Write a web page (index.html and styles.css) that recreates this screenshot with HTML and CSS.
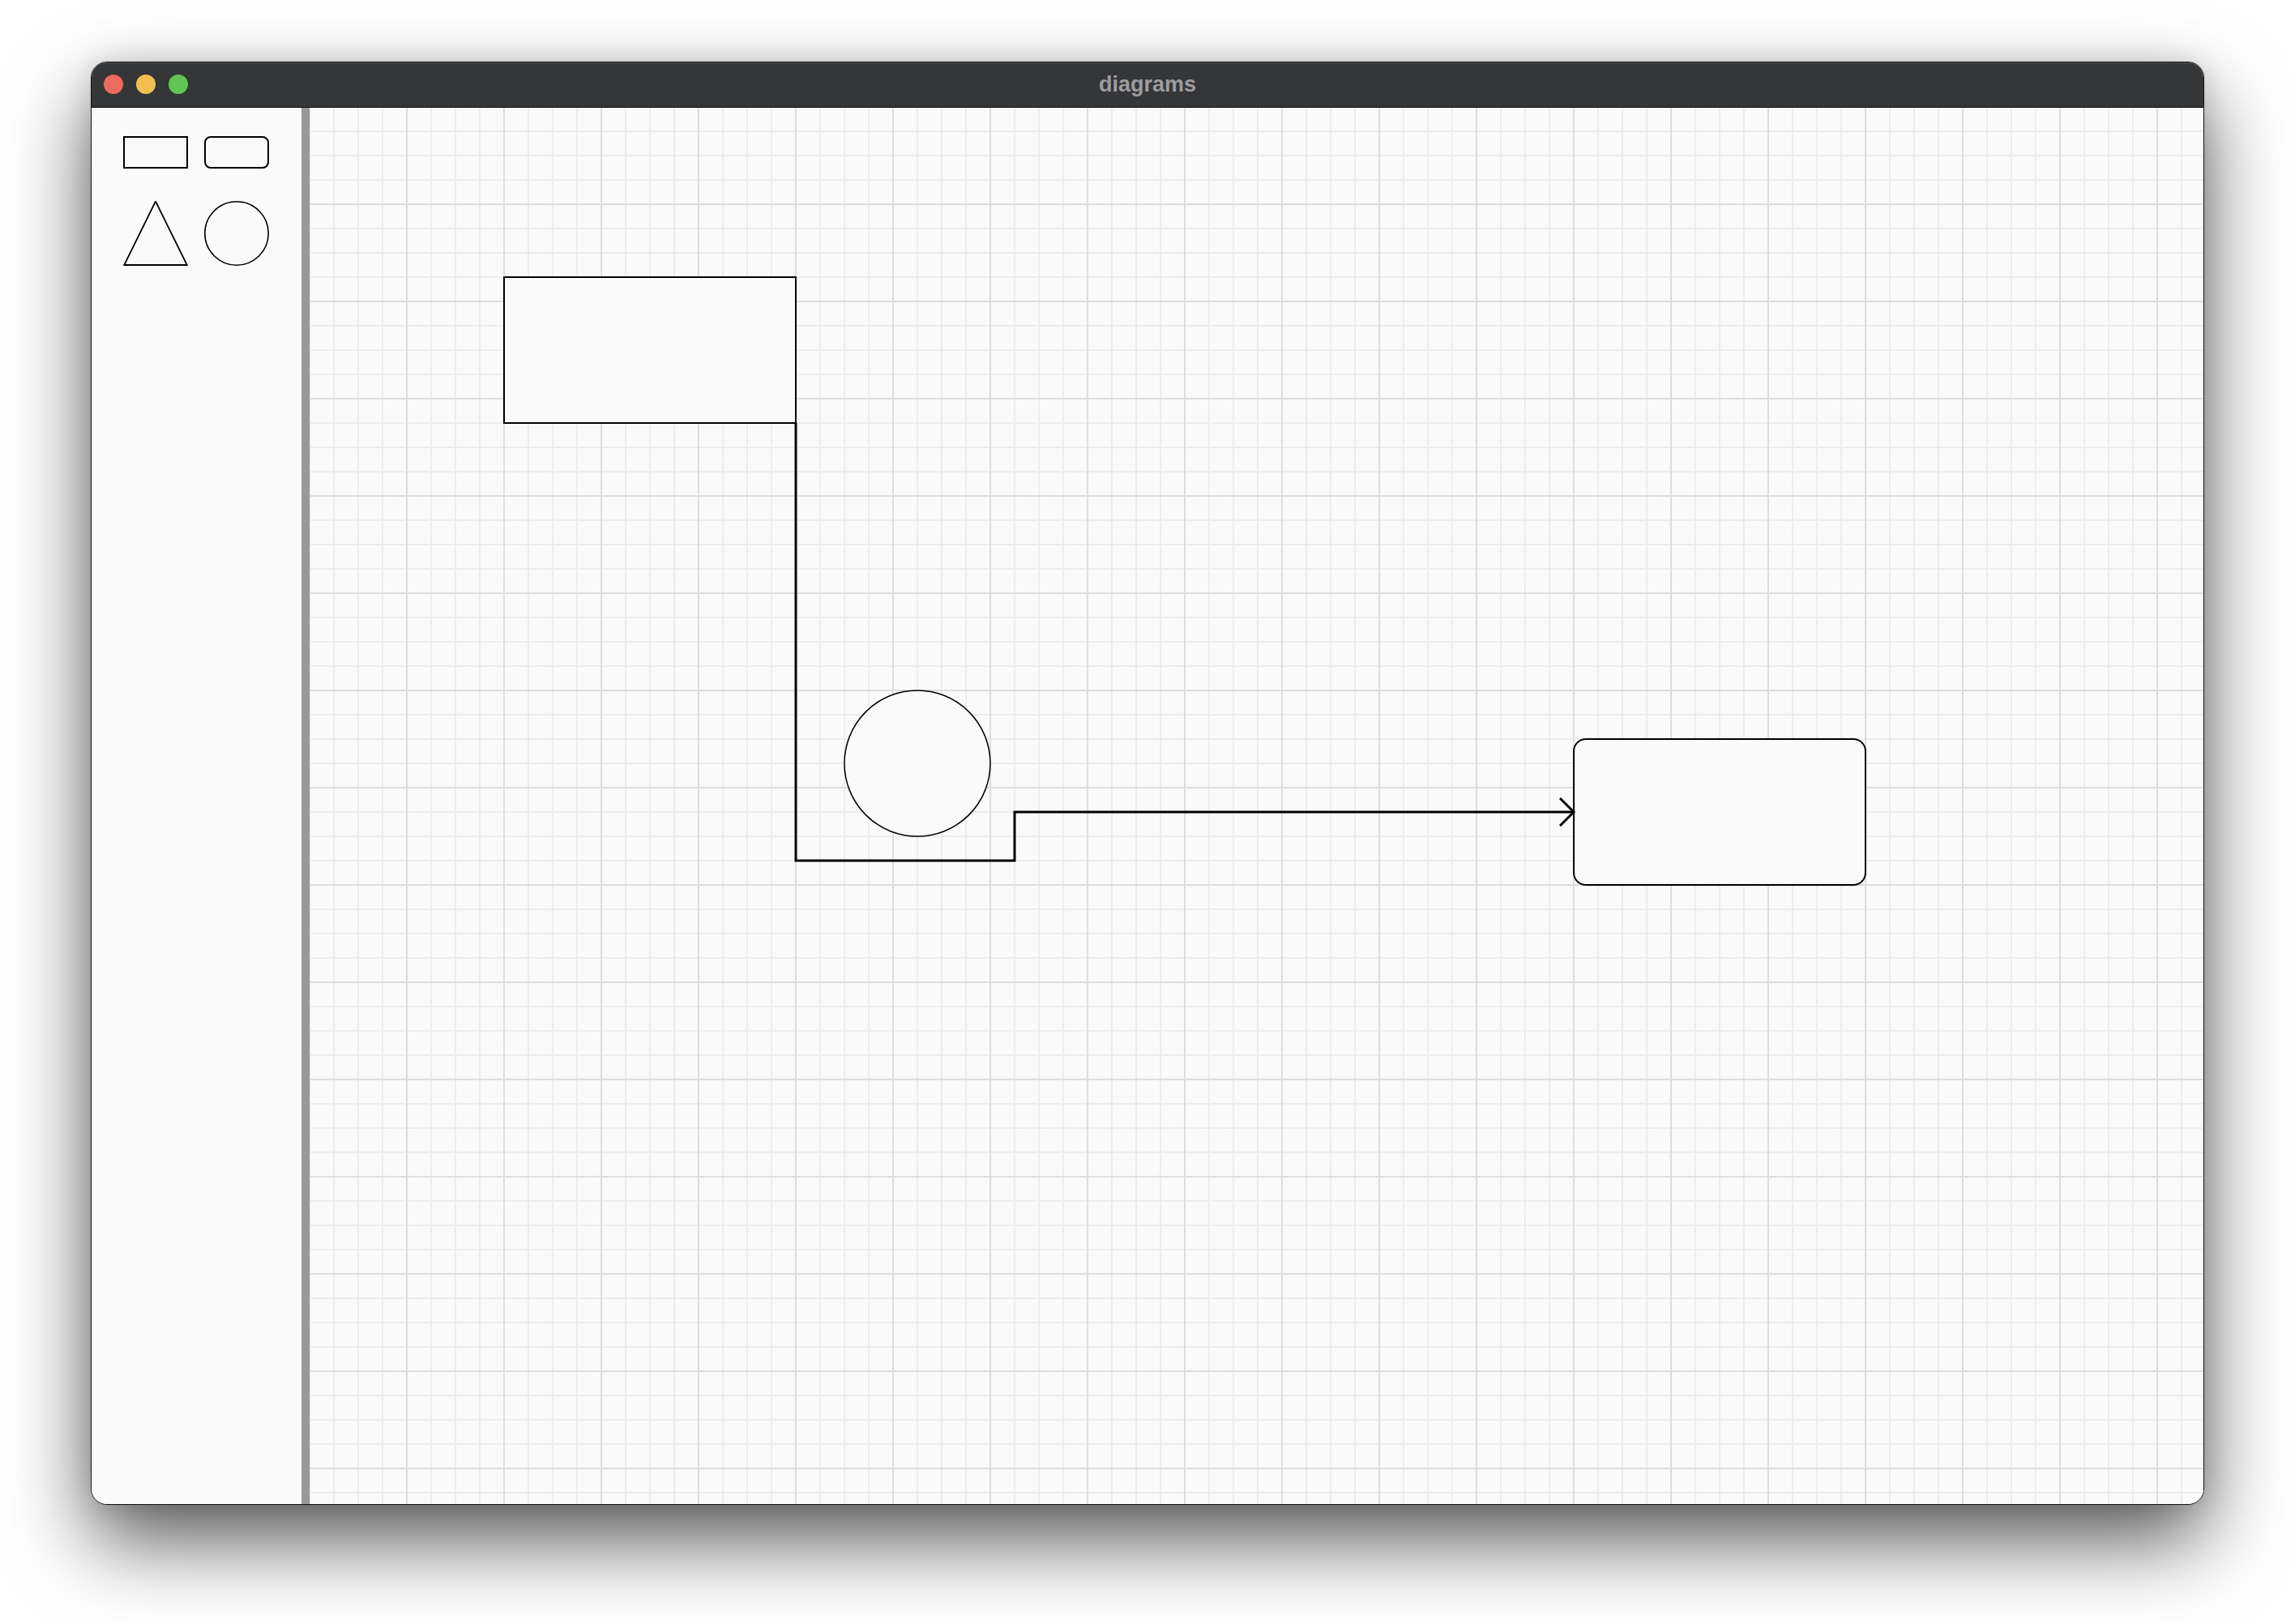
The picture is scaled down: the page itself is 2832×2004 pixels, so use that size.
FILE: index.html
```html
<!DOCTYPE html>
<html>
<head>
<meta charset="utf-8">
<title>diagrams</title>
<link rel="stylesheet" href="styles.css">
</head>
<body>
<div class="window">
  <div class="titlebar">
    <div class="lights">
      <span class="light red"></span>
      <span class="light yellow"></span>
      <span class="light green"></span>
    </div>
    <div class="title">diagrams</div>
  </div>
  <div class="main">
    <aside class="sidebar">
      <div class="palette">
        <svg class="tool tool-wide" width="80" height="40" viewBox="0 0 80 40"><rect x="1" y="1" width="78" height="38" fill="none" stroke="#000" stroke-width="2"/></svg>
        <svg class="tool tool-wide" width="80" height="40" viewBox="0 0 80 40"><rect x="1" y="1" width="78" height="38" rx="7" fill="none" stroke="#000" stroke-width="2"/></svg>
        <svg class="tool" width="80" height="80" viewBox="0 0 80 80"><polygon points="40,0.5 1.2,79 78.8,79" fill="none" stroke="#000" stroke-width="1.8"/></svg>
        <svg class="tool" width="80" height="80" viewBox="0 0 80 80"><circle cx="40" cy="40" r="39.2" fill="none" stroke="#000" stroke-width="1.6"/></svg>
      </div>
    </aside>
    <div class="divider"></div>
    <div class="canvas">
      <svg class="diagram" width="2337" height="1724" viewBox="0 0 2337 1724">
        <rect x="240" y="210" width="360" height="180" fill="#fafafa" stroke="#000" stroke-width="2"/>
        <circle cx="750" cy="810" r="90" fill="#fafafa" stroke="#000" stroke-width="1.5"/>
        <rect x="1560" y="780" width="360" height="180" rx="15" ry="15" fill="#fafafa" stroke="#000" stroke-width="2"/>
        <polyline points="600,390 600,930 870,930 870,870 1559,870" fill="none" stroke="#000" stroke-width="3" stroke-linejoin="miter"/>
        <polyline points="1543,853 1560,870 1543,887" fill="none" stroke="#000" stroke-width="3" stroke-linejoin="miter"/>
      </svg>
    </div>
  </div>
</div>
</body>
</html>
```

FILE: styles.css
```css
html, body {
  margin: 0;
  padding: 0;
  background: #ffffff;
}

body {
  width: 2832px;
  height: 2004px;
  overflow: hidden;
  font-family: "Liberation Sans", Arial, sans-serif;
}

.window {
  box-sizing: border-box;
  margin: 76px 0 0 112px;
  width: 2608px;
  height: 1781px;
  border: 1px solid #111;
  border-radius: 20px;
  overflow: hidden;
  display: flex;
  flex-direction: column;
  background: #fafafa;
  box-shadow: 0 44px 100px rgba(0, 0, 0, 0.66), 0 0 30px rgba(0, 0, 0, 0.12);
}

.titlebar {
  box-sizing: border-box;
  flex: 0 0 56px;
  height: 56px;
  background: #353638;
  border-bottom: 1px solid #0e0e0e;
  display: flex;
  align-items: center;
  justify-content: center;
  position: relative;
  box-shadow: inset 0 1px 0 rgba(255, 255, 255, 0.14);
}

.lights {
  position: absolute;
  left: 15px;
  top: 15px;
  display: flex;
  gap: 16px;
}

.light {
  width: 24px;
  height: 24px;
  border-radius: 50%;
  display: block;
}

.red { background: #ed6a5e; }
.yellow { background: #f4bf4f; }
.green { background: #61c554; }

.title {
  color: #9c9c9e;
  font-weight: bold;
  font-size: 27px;
  line-height: 1;
  margin-top: 0;
}

.main {
  flex: 1 1 auto;
  display: flex;
  min-height: 0;
}

.sidebar {
  flex: 0 0 259px;
  background: #fafafa;
  box-sizing: border-box;
  padding: 35px 0 0 39px;
}

.palette {
  display: grid;
  grid-template-columns: 80px 80px;
  column-gap: 20px;
  row-gap: 40px;
  align-items: start;
}

.tool {
  display: block;
}

.divider {
  flex: 0 0 10px;
  background: #999999;
}

.canvas {
  flex: 1 1 auto;
  position: relative;
  overflow: hidden;
  background:
    linear-gradient(to right, #dddddd 2px, transparent 2px) -1px -2px / 120px 120px,
    linear-gradient(to bottom, #dddddd 2px, transparent 2px) -1px -2px / 120px 120px,
    linear-gradient(to right, #ededed 2px, transparent 2px) -1px -2px / 30px 30px,
    linear-gradient(to bottom, #ededed 2px, transparent 2px) -1px -2px / 30px 30px,
    #fafafa;
}

.diagram {
  position: absolute;
  left: 0;
  top: -1px;
  display: block;
}
```
